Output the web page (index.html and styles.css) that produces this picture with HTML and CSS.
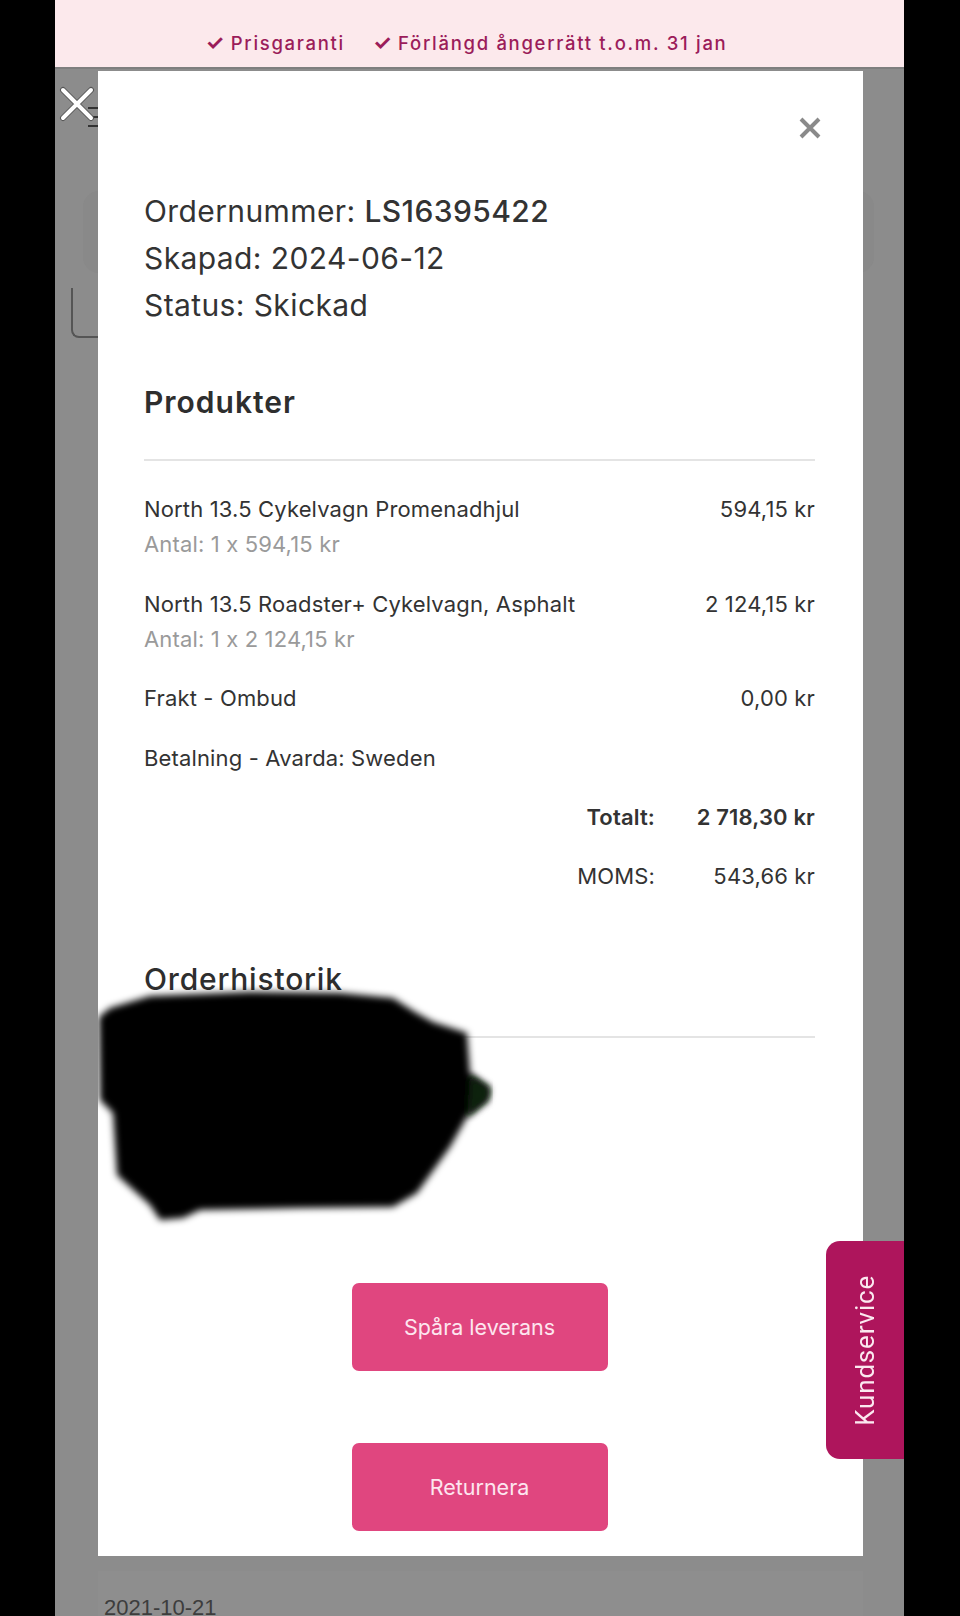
FILE: index.html
```html
<!DOCTYPE html>
<html lang="sv">
<head>
<meta charset="utf-8">
<title>Order LS16395422</title>
<link rel="stylesheet" href="styles.css">
</head>
<body>
<div class="page">
  <div class="promo">
    <span class="promo-item"><span class="check">✓</span> Prisgaranti</span>
    <span class="promo-item"><span class="check">✓</span> Förlängd ångerrätt t.o.m. 31 jan</span>
  </div>

  <div class="backdrop">
    <div class="bg-search"></div>
    <div class="bg-select"></div>
    <div class="bg-menu"><span></span><span></span><span></span></div>
    <svg class="menu-close" viewBox="0 0 36 36" width="36" height="36">
      <path d="M4 4 L32 32 M32 4 L4 32" stroke="#555" stroke-width="6" stroke-linecap="round"/>
      <path d="M4 4 L32 32 M32 4 L4 32" stroke="#fff" stroke-width="4" stroke-linecap="round"/>
    </svg>

    <div class="modal">
      <svg class="modal-close" viewBox="0 0 24 24" width="24" height="24">
        <path d="M3 3 L21 21 M21 3 L3 21" stroke="#8a8a8a" stroke-width="4" stroke-linecap="butt"/>
      </svg>

      <div class="order-info">
        <div>Ordernummer: <span class="order-no">LS16395422</span></div>
        <div>Skapad: 2024-06-12</div>
        <div>Status: Skickad</div>
      </div>

      <h2 class="section-title">Produkter</h2>
      <hr class="divider">

      <div class="lines">
        <div class="line">
          <div class="line-main">
            <span>North 13.5 Cykelvagn Promenadhjul</span>
            <span>594,15 kr</span>
          </div>
          <div class="line-sub">Antal: 1 x 594,15 kr</div>
        </div>
        <div class="line">
          <div class="line-main">
            <span>North 13.5 Roadster+ Cykelvagn, Asphalt</span>
            <span>2 124,15 kr</span>
          </div>
          <div class="line-sub">Antal: 1 x 2 124,15 kr</div>
        </div>
        <div class="line">
          <div class="line-main">
            <span>Frakt - Ombud</span>
            <span>0,00 kr</span>
          </div>
        </div>
        <div class="line">
          <div class="line-main">
            <span>Betalning - Avarda: Sweden</span>
          </div>
        </div>
        <div class="totals">
          <span class="t-label strong">Totalt:</span><span class="t-value strong">2 718,30 kr</span>
          <span class="t-label">MOMS:</span><span class="t-value">543,66 kr</span>
        </div>
      </div>

      <h2 class="section-title history-title">Orderhistorik</h2>
      <hr class="divider">
      <div class="history"></div>

      <div class="actions">
        <button class="btn">Spåra leverans</button>
        <button class="btn">Returnera</button>
      </div>

      <svg class="redaction" viewBox="0 900 410 260" width="410" height="260">
        <defs><filter id="soft" x="-10%" y="-10%" width="120%" height="120%"><feGaussianBlur stdDeviation="3.5"/></filter></defs>
        <path filter="url(#soft)" fill="#020402" d="M12 937 L52 925 L152 921 L242 922 L295 927 L317 941 L335 951 L369 962 L372 1002 L392 1017 L390 1029 L369 1046 L352 1076 L319 1122 L295 1136 L202 1137 L102 1139 L85 1147 L62 1149 L52 1134 L19 1104 L15 1042 L2 1029 L1 946 Z"/>
        <path filter="url(#soft)" fill="#0f200f" d="M372 1004 L392 1017 L390 1029 L369 1046 Z"/>
      </svg>
    </div>

    <div class="bg-card"><span class="bg-date">2021-10-21</span></div>

    <div class="support-tab"><span>Kundservice</span></div>
  </div>
</div>
</body>
</html>
```

FILE: styles.css
```css
html, body {
  margin: 0;
  padding: 0;
  background: #000;
  height: 1616px;
  overflow: hidden;
}

.page {
  position: relative;
  width: 849px;
  margin-left: 55px;
  height: 1616px;
  display: flex;
  flex-direction: column;
  font-family: Inter, "Liberation Sans", sans-serif;
  font-feature-settings: "calt" 0;
  overflow: hidden;
}

.promo {
  flex: 0 0 69px;
  background: #fce9ec;
  display: flex;
  justify-content: center;
  align-items: center;
  gap: 28px;
  padding-right: 26px;
  box-sizing: border-box;
  color: #9b1c5a;
  font-size: 18.5px;
  font-weight: 500;
  letter-spacing: 1.7px;
  padding-top: 17px;
  border-bottom: 2px solid #7e7e7e;
}
.check {
  font-size: 21px;
  font-weight: 700;
  letter-spacing: 0;
}

.backdrop {
  position: relative;
  flex: 1 0 auto;
  background: #8c8c8c;
  display: flex;
  flex-direction: column;
}

.bg-search {
  position: absolute;
  left: 28px;
  top: 122px;
  width: 791px;
  height: 82px;
  border-radius: 16px;
  background: #898989;
}

.bg-select {
  position: absolute;
  left: 16px;
  top: 219px;
  width: 200px;
  height: 48px;
  border-left: 2px solid #555;
  border-bottom: 2px solid #555;
  border-bottom-left-radius: 8px;
}

.bg-menu {
  position: absolute;
  left: 33px;
  top: 38px;
  width: 14px;
  display: flex;
  flex-direction: column;
  gap: 7px;
}
.bg-menu span {
  display: block;
  height: 2px;
  background: #333;
}

.menu-close {
  position: absolute;
  left: 4px;
  top: 17px;
}

.modal {
  position: relative;
  flex: 0 0 auto;
  margin: 2px 0 0 43px;
  width: 765px;
  background: #fff;
  box-sizing: border-box;
  padding: 117px 48px 25px 46px;
  color: #333;
}

.modal-close {
  position: absolute;
  right: 41px;
  top: 45px;
}

.order-info {
  font-size: 30px;
  line-height: 47px;
  letter-spacing: 0.4px;
  color: #333;
}
.order-no {
  font-weight: 500;
}

.section-title {
  margin: 53px 0 0;
  font-size: 30px;
  line-height: 40px;
  font-weight: 600;
  letter-spacing: 1px;
  color: #2e2e2e;
}
.history-title {
  margin-top: 65px;
  font-weight: 500;
  letter-spacing: 0.8px;
}

.divider {
  margin: 37px 0 0;
  border: 0;
  height: 2px;
  background: #e4e4e4;
}

.lines {
  margin-top: 31px;
  display: flex;
  flex-direction: column;
  gap: 24.5px;
  font-size: 22px;
  line-height: 35px;
  letter-spacing: 0.15px;
}

.line-main {
  display: flex;
  justify-content: space-between;
  color: #333;
}
.line-sub {
  color: #9a9a9a;
}

.totals {
  display: grid;
  grid-template-columns: auto 160px;
  justify-content: end;
  row-gap: 24px;
  text-align: right;
  color: #333;
}
.strong {
  font-weight: 600;
}

.history {
  height: 245px;
}

.actions {
  display: flex;
  flex-direction: column;
  align-items: center;
  gap: 72px;
}

.btn {
  width: 256px;
  height: 88px;
  border: 0;
  border-radius: 7px;
  background: #e0467f;
  color: #fde6ef;
  font-family: Inter, "Liberation Sans", sans-serif;
  font-size: 21.5px;
}

.redaction {
  position: absolute;
  left: 0;
  top: 900px;
  pointer-events: none;
}

.bg-card {
  margin: 15px 0 0 43px;
  width: 765px;
  flex: 1 0 auto;
  background: #8e8e8e;
  box-sizing: border-box;
  padding: 24px 0 0 6px;
}
.bg-date {
  font-family: "Liberation Sans", sans-serif;
  font-size: 22px;
  line-height: 26px;
  color: #3d3d3d;
}

.support-tab {
  position: absolute;
  right: 0;
  top: 1172px;
  width: 78px;
  height: 218px;
  background: #ae155c;
  border-radius: 14px 0 0 14px;
  display: flex;
  align-items: center;
  justify-content: center;
}
.support-tab span {
  writing-mode: vertical-rl;
  transform: rotate(180deg);
  color: #fbe9f0;
  font-family: Roboto, "Liberation Sans", sans-serif;
  font-size: 26px;
  letter-spacing: 0.8px;
}
```
